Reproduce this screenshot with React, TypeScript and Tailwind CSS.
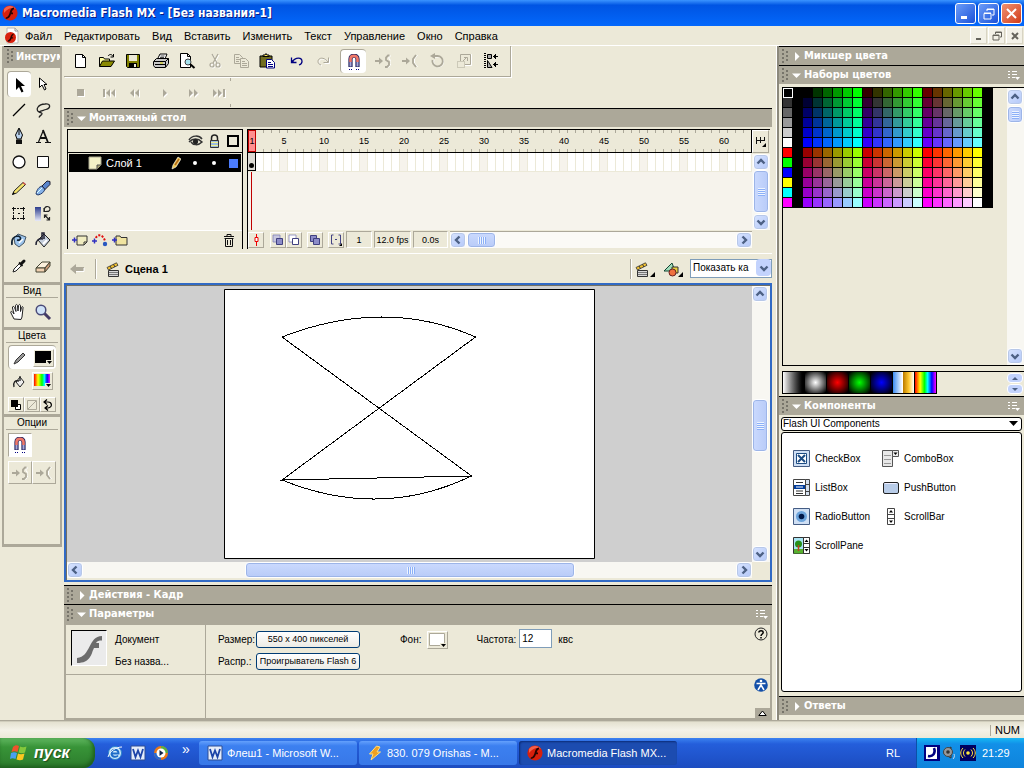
import React from "react";

type Kids = { children?: React.ReactNode };
type IcProps = Kids & { w?: number; h?: number; vb?: string };

function Ic({ w = 16, h = 16, vb, children }: IcProps) {
  return (
    <svg width={w} height={h} viewBox={vb ?? `0 0 ${w} ${h}`} fill="none" className="block shrink-0" aria-hidden="true">
      {children}
    </svg>
  );
}

/* ---------- logos ---------- */
const FlashBall = ({ s = 16 }: { s?: number }) => (
  <Ic w={s} h={s} vb="0 0 16 16">
    <circle cx="8" cy="8" r="7.6" fill="#d8200c" />
    <path d="M2 4A7.5 7.5 0 0 1 14 4Q8 1 2 8Z" fill="#f4604a" />
    <path d="M12 2.5C8.5 2.8 8.3 6 7.4 8.4 6.6 10.8 5.7 12 3.8 12.4v1.7c3.2-.2 4.4-2.3 5.2-4.8h2V7.6H9.7C10.200 5.800 10.600 4.700 12 4.300Z" fill="#2a0400" />
  </Ic>
);
const FlashDoc = () => (
  <Ic w={16} h={17}>
    <path d="M3 1h8l3 3v12H3z" fill="#fff" stroke="#b8b8b8" />
    <path d="M11 1v3h3" stroke="#999" />
    <circle cx="6.500" cy="10.500" r="5.500" fill="#d8200c" />
    <path d="M9.500 6.500C7 7 7 9 6.300 10.600 5.700 12.400 5 13 3.800 13.500v1.300c2.400-.2 3.300-1.800 3.800-3.300h1.500v-1.300H8c.3-1.200.600-2 1.500-2.300Z" fill="#2a0400" />
  </Ic>
);

/* ---------- main toolbar icons ---------- */
const NewI = () => <Ic><path d="M2.500 1.500h7l3 3v10h-10z" fill="#fff" stroke="#000" /><path d="M9.500 1.500v3h3" stroke="#000" /></Ic>;
const OpenI = () => (
  <Ic>
    <path d="M.5 13.500v-9h4l1 1.500h5v2" fill="#ffff9c" stroke="#000" />
    <path d="M.5 13.500l3-5.500h12l-3.500 5.500z" fill="#8a8a00" stroke="#000" />
    <path d="M9 3c1.500-2 4-2 5 .5M14.500 1v3h-3" stroke="#000" />
  </Ic>
);
const SaveI = () => (
  <Ic>
    <path d="M1.500 1.500h13v13h-12l-1-1z" fill="#808000" stroke="#000" />
    <path d="M4 2h8v6H4z" fill="#ece9d8" /><path d="M4 10h8v4.500H4z" fill="#000" /><path d="M9 11h2v3H9z" fill="#ece9d8" />
  </Ic>
);
const PrintI = () => (
  <Ic>
    <path d="M5 5l2-4h7l-2 5" fill="#fff" stroke="#000" /><path d="M7.500 3h4M7 4.500h4" stroke="#000" strokeWidth=".7" />
    <path d="M.5 8.500l3-3h12v5l-3 4H2l-1.500-2z" fill="#c8c8c8" stroke="#000" />
    <path d="M1 8.500h11.500l3-3M12.500 8.500v5.500M2 11.500h10" stroke="#000" /><path d="M7 10h3" stroke="#d8d000" />
  </Ic>
);
const PreviewI = () => (
  <Ic w={17} h={16}>
    <path d="M1.500.5h7l3 3v11h-10z" fill="#fff" stroke="#000" /><path d="M8.500.5v3h3" stroke="#000" />
    <circle cx="9" cy="9" r="3" fill="#a8e4f0" stroke="#444" /><path d="M11 11l4.500 4" stroke="#000" strokeWidth="2" />
  </Ic>
);
const CutI = () => (
  <Ic>
    <g stroke="#fff" transform="translate(1 1)"><path d="M5 1l5 9M11 1L6 10" /><circle cx="5" cy="12" r="2" /><circle cx="11" cy="12" r="2" /></g>
    <g stroke="#aca899" strokeWidth="1.200"><path d="M5 1l5 9M11 1L6 10" /><circle cx="5" cy="12" r="2" /><circle cx="11" cy="12" r="2" /></g>
  </Ic>
);
const CopyI = () => (
  <Ic>
    <path d="M1.500 1.500h5l3 3v6h-8z" stroke="#aca899" /><path d="M3 4.500h3M3 6.500h4M3 8.500h3" stroke="#aca899" />
    <path d="M7.500 5.500h5l3 3v6h-8z" fill="#ece9d8" stroke="#aca899" /><path d="M9 8.500h3M9 10.500h5M9 12.500h5" stroke="#aca899" />
  </Ic>
);
const PasteI = () => (
  <Ic>
    <path d="M1 3h12v11H1z" fill="#706c20" stroke="#000" /><path d="M4 3.500V2h2l1-1.500L8 2h2v1.500z" fill="#ffe860" stroke="#000" />
    <path d="M7.500 6.500h5l3 3v5.500h-8z" fill="#fff" stroke="#000080" /><path d="M9 9.500h3M9 11.500h5M9 13.500h5" stroke="#000080" />
  </Ic>
);
const UndoI = () => <Ic><path d="M2.500 4.500v5h5M3 9c4-5.500 10-4.500 10-.500 0 2-1.500 3-3 3.500" stroke="#000080" strokeWidth="1.300" /><path d="M2 6v4h4z" fill="#000080" /></Ic>;
const RedoI = () => (
  <Ic>
    <path d="M13.500 4.500v5h-5M13 9C9 3.500 3 4.500 3 8.500c0 2 1.500 3 3 3.500" stroke="#fff" transform="translate(1 1)" />
    <path d="M13.500 4.500v5h-5M13 9C9 3.500 3 4.500 3 8.500c0 2 1.500 3 3 3.500" stroke="#aca899" />
  </Ic>
);
const MagnetI = () => (
  <Ic>
    <path d="M4.500 13V5c0-4.500 7-4.500 7 0v8" stroke="#20205c" strokeWidth="4.200" />
    <path d="M4.500 8V5c0-4.200 7-4.200 7 0v3" stroke="#f07868" strokeWidth="2.600" />
    <path d="M4.500 8v4.500M11.500 8v4.500" stroke="#a8a8d8" strokeWidth="2" />
    <path d="M3 15.500h1M5 15.500h1M10 15.500h1M12 15.500h1" stroke="#000080" />
  </Ic>
);
const SmoothI = () => (
  <Ic>
    <path d="M14 3h-2v3l2 1.500v3L12 14H9" stroke="#fff" transform="translate(2 0)" />
    <path d="M0 8h4" stroke="#aca899" strokeWidth="2" /><path d="M4 4.500L8 8l-4 3.500z" fill="#aca899" />
    <path d="M14.500 2.500h-1.500l-2 2V7l3 2v3l-2 2h-2" stroke="#aca899" strokeWidth="1.800" />
  </Ic>
);
const StraightI = () => (
  <Ic>
    <path d="M15.500 2l-3 4v4l3 4" stroke="#fff" />
    <path d="M0 8h4" stroke="#aca899" strokeWidth="2" /><path d="M4 4.500L8 8l-4 3.500z" fill="#aca899" />
    <path d="M14 2l-3 4v4l3 4" stroke="#aca899" strokeWidth="1.800" />
  </Ic>
);
const RotateI = () => (
  <Ic><path d="M4 6a5 5 0 1 0 5-3H4" stroke="#fff" transform="translate(1 1)" /><path d="M3.500 7a5.200 5.200 0 1 0 5-4H4" stroke="#aca899" strokeWidth="1.800" /><path d="M1 3l5-3v6z" fill="#aca899" /></Ic>
);
const ScaleI = () => (
  <Ic>
    <path d="M4.500 8V1.500h10v10H9" stroke="#aca899" /><path d="M7 8l4-4M8 4.500h3.500V8" stroke="#aca899" />
    <path d="M1.500 8.500h7v6h-7z" stroke="#aca899" strokeDasharray="1 1" /><path d="M15.500 1v11.500H9" stroke="#fff" />
  </Ic>
);
const AlignI = () => (
  <Ic>
    <path d="M2 0v16" stroke="#000" strokeWidth="2" strokeDasharray="1 1" /><path d="M4.500 1.500h4v4h-4z" fill="#aaa" stroke="#000" />
    <path d="M4.500 7.500v7H9z" fill="#aaa" stroke="#000" /><path d="M10 3.500h5M10 11.500h5M11.500 2v3M12.500 1v5M11.500 10v3M12.500 9v5" stroke="#000" />
  </Ic>
);

/* ---------- toolbox icons ---------- */
const Tools: [string, React.ReactNode][] = [
  ["Стрелка", <Ic w={18} h={18}><path d="M5 2v12l3-3 2.500 5.500 2-1L10 10h4z" fill="#000" /></Ic>],
  ["Выделение", <Ic w={18} h={18}><path d="M5.500 3v9.500L8 10l2.500 5 1.500-1-2-4.500h3z" fill="#fff" stroke="#000" /></Ic>],
  ["Линия", <Ic w={18} h={18}><path d="M3 15L15 3" stroke="#000" strokeWidth="1.200" /></Ic>],
  ["Лассо", <Ic w={18} h={18}><path d="M5 11C1 9 4 3 11 3c6-.500 6 4 1 5.500-3 1-5 1-7 2.500 1 1 2.500.500 3 1.500.300 1.500-2 1.500-3 4" stroke="#222" strokeWidth="1.300" /></Ic>],
  ["Перо", <Ic w={18} h={18}><path d="M9 1l-3.500 7L7 12h4l1.500-4z" fill="#b9d2ee" stroke="#000" /><path d="M9 2v6" stroke="#000" /><path d="M6 12.500h6V17H6z" fill="#111" /></Ic>],
  ["Текст", <Ic w={18} h={18}><path d="M2 15.500h5M11 15.500h6M4.500 15L9.500 3" stroke="#111" strokeWidth="1.200" /><path d="M9 3l5 12.500M6 11h6.500" stroke="#111" strokeWidth="1.800" /></Ic>],
  ["Овал", <Ic w={18} h={18}><circle cx="9" cy="9" r="6" fill="#fff" stroke="#111" strokeWidth="1.300" /></Ic>],
  ["Прямоугольник", <Ic w={18} h={18}><path d="M3.500 3.500h11v11h-11z" fill="#fff" stroke="#111" /></Ic>],
  ["Карандаш", <Ic w={18} h={18}><path d="M2.500 15.500l1.500-3.500L13 3.500l2.500 2L6.500 14z" fill="#f5e46c" stroke="#222" /><path d="M13 3.500l2.500 2" stroke="#d05050" strokeWidth="1.500" /><path d="M2 16l3-1.500L3.500 13z" fill="#000" /></Ic>],
  ["Кисть", <Ic w={18} h={18}><path d="M2 15c1-5 3-7 6-8l3 3c-1 3-3 5-7 6z" fill="#86b2e8" stroke="#223a6a" /><path d="M8 7l5-5 3 .5v3l-5 5z" fill="#5a86cc" stroke="#223" /><path d="M3 14l5-5" stroke="#dff" /></Ic>],
  ["Трансформация", <Ic w={18} h={18}><path d="M4 3.500h10M4 13.500h10M3.500 4v10M13.500 4v10" stroke="#111" strokeDasharray="2 1" /><path d="M2 3.500h3M12 3.500h3M2 13.500h3M12 13.500h3M3.500 2v3M13.500 2v3M3.500 12v3M13.500 12v3M8 8.500h2" stroke="#111" /></Ic>],
  ["Заливка", <Ic w={18} h={18}><defs><linearGradient id="gt" x1="0" y1="0" x2="0" y2="1"><stop offset="0" stopColor="#2c3c8c" /><stop offset="1" stopColor="#e8eaf8" /></linearGradient></defs><path d="M1 2h6v14H1z" fill="url(#gt)" /><path d="M10.500 6C9 1 16 0 16 4c0 2-2 3-3.500 2M10 3v3.500h3M10.500 10l5 5M10.500 13v-3h3M12.500 15h3v-3" stroke="#222" strokeWidth="1.200" /></Ic>],
  ["Чернила", <Ic w={18} h={18}><path d="M4 7l4-4 8 3-2 6-5 4-4-3z" fill="#9cc4ec" stroke="#456" /><path d="M2 14C1 8 4 5 8 5c4 1 3 5-1 4" stroke="#123" strokeWidth="1.600" /><path d="M9 12l4-4" stroke="#fff" strokeWidth="1.500" /></Ic>],
  ["Ведро", <Ic w={18} h={18}><path d="M4 9l6-6 6 6-6 7z" fill="#c4cedc" stroke="#222" /><path d="M2 14c0-5 3-7 7-6M10 8V2H8v5" stroke="#223" strokeWidth="1.500" /><path d="M9 13l4-4" stroke="#fff" strokeWidth="2" /></Ic>],
  ["Пипетка", <Ic w={18} h={18}><path d="M3 15l1-3 6-6 2 2-6 6z" fill="#fff" stroke="#222" /><path d="M9 5.500l3.500 3.500" stroke="#111" strokeWidth="1.800" /><path d="M11 7L14 4" stroke="#111" strokeWidth="3" strokeLinecap="round" /></Ic>],
  ["Ластик", <Ic w={18} h={18}><path d="M2 11l6-6h8l-5 6z" fill="#fcf0dc" stroke="#443" /><path d="M2 11h9v4H2z" fill="#f0d0b0" stroke="#443" /><path d="M11 11l5-6v4l-5 6z" fill="#cc9a78" stroke="#443" /></Ic>],
];
const HandI = () => <Ic w={18} h={18}><path d="M5 16L2 10c-1-2 1-2 2-.5L5 11 3.500 5C3 3 5 3 5.500 4.500L7 8.500 6.500 3c0-2 2-2 2 0L9 8l.500-5c0-2 2-2 2 0v5.500l1-4c.500-1.500 2-1 1.500.500L13 14l-1 2.500z" fill="#fff" stroke="#222" /></Ic>;
const ZoomI = () => <Ic w={18} h={18}><path d="M10 10l6 6" stroke="#443a64" strokeWidth="3" /><circle cx="7" cy="7" r="4.800" fill="#cfe2f8" stroke="#4a4a78" strokeWidth="1.500" /></Ic>;

/* ---------- shared pieces ---------- */
const Chevron = ({ dir }: { dir: "up" | "down" | "left" | "right" }) => {
  const d = { up: "M1.500 6.500L5 3l3.500 3.500", down: "M1.500 3.500L5 7l3.500-3.500", left: "M6.500 1.500L3 5l3.500 3.500", right: "M3.500 1.500L7 5 3.500 8.500" }[dir];
  return <Ic w={10} h={10}><path d={d} stroke="#4d6185" strokeWidth="2.400" /></Ic>;
};
const ScrollBtn = ({ dir }: { dir: "up" | "down" | "left" | "right" }) => (
  <button aria-label={dir} className="flex size-4 shrink-0 items-center justify-center rounded-sm border border-white bg-linear-to-br from-[#d8e4ff] to-[#b4c8f8] shadow-[0_0_0_1px_#b8c8e8_inset]">
    <Chevron dir={dir} />
  </button>
);
const VThumb = ({ cls }: { cls: string }) => (
  <div className={`flex w-4 shrink-0 flex-col items-center justify-center gap-px rounded-sm border border-white bg-linear-to-r from-[#cbdafe] to-[#b8cbf8] shadow-[0_0_0_1px_#9db5e8_inset] ${cls}`}>
    {[0, 1, 2, 3].map((i) => <i key={i} className="h-px w-[7px] bg-[#eef4fe] shadow-[0_1px_0_#8cb0f8]" />)}
  </div>
);
const HThumb = ({ cls }: { cls: string }) => (
  <div className={`flex h-4 shrink-0 items-center justify-center gap-px rounded-sm border border-white bg-linear-to-b from-[#cbdafe] to-[#b8cbf8] shadow-[0_0_0_1px_#9db5e8_inset] ${cls}`}>
    {[0, 1, 2, 3].map((i) => <i key={i} className="h-[7px] w-px bg-[#eef4fe] shadow-[1px_0_0_#8cb0f8]" />)}
  </div>
);
const Grip = () => (
  <Ic w={6} h={15}>
    {[0, 4, 8, 12].map((y) => <path key={y} d={`M0 ${y}h2v2H0z`} fill="#77746a" />)}
    {[2, 6, 10].map((y) => <path key={y} d={`M4 ${y}h2v2H4z`} fill="#77746a" />)}
  </Ic>
);
function PanelHead({ title, open, menu }: { title: string; open?: boolean; menu?: boolean }) {
  return (
    <h2 className="flex h-[19px] shrink-0 items-center border-t border-black bg-[#aca899] pr-1 pl-[3px] font-['DejaVu_Sans_Condensed','DejaVu_Sans',sans-serif] text-[11px] font-bold text-white">
      <Grip />
      <button className="ml-1 flex items-center gap-[3px]">
        <Ic w={9} h={9}>
          {open ? <path d="M0 2.500h9L4.500 7z" fill="#fff" /> : <path d="M3 0v9l4.500-4.500z" fill="#fff" />}
        </Ic>
        <span className="leading-[14px] whitespace-nowrap">{title}</span>
      </button>
      {menu && (
        <button aria-label="Меню" className="ml-auto">
          <Ic w={12} h={11}><path d="M0 1.500h2M4 1.500h5M0 4.500h2M4 4.500h5M0 7.500h2M4 7.500h3" stroke="#fff" /><path d="M7 7h5L9.500 10z" fill="#fff" /></Ic>
        </button>
      )}
    </h2>
  );
}
const Tb = ({ label, on, children }: Kids & { label: string; on?: boolean }) => (
  <button aria-label={label} className={`flex h-6 w-[26px] shrink-0 items-center justify-center rounded-sm ${on ? "border-t border-l border-[#aca899] bg-white" : ""}`}>
    {children}
  </button>
);
const raised = "border border-t-white border-l-white border-r-[#aca899] border-b-[#aca899]";
const sunken = "border border-t-[#aca899] border-l-[#aca899] border-r-white border-b-white";

/* ---------- window frame ---------- */
const capBtn = "flex size-[21px] items-center justify-center rounded-[3px] border border-white";
function TitleBar() {
  return (
    <header className="flex h-[26px] shrink-0 items-center gap-1 bg-linear-to-b from-[#3a93ff] via-[#0054e3] via-20% to-[#0468fb] px-0.5">
      <FlashBall />
      <h1 className="flex-1 font-['DejaVu_Sans_Condensed','DejaVu_Sans',sans-serif] text-[12px] font-bold whitespace-nowrap text-white [text-shadow:1px_1px_0_#0a1883]">
        Macromedia Flash MX - [Без названия-1]
      </h1>
      <div className="flex gap-0.5">
        <button aria-label="Свернуть" className={`${capBtn} bg-linear-to-br from-[#6c9cf8] to-[#1c50d8]`}><Ic w={13} h={13}><path d="M2 9h6v3H2z" fill="#fff" /></Ic></button>
        <button aria-label="Восстановить" className={`${capBtn} bg-linear-to-br from-[#6c9cf8] to-[#1c50d8]`}><Ic w={13} h={13}><path d="M5 4V2h7v6h-2M2 6.500h7V12H2zM5 2.500h7M2 6h7" stroke="#fff" /></Ic></button>
        <button aria-label="Закрыть" className={`${capBtn} bg-linear-to-br from-[#f09070] to-[#d03810]`}><Ic w={13} h={13}><path d="M2 2l9 9M11 2l-9 9" stroke="#fff" strokeWidth="2" /></Ic></button>
      </div>
    </header>
  );
}
function MenuBar() {
  const items = ["Файл", "Редактировать", "Вид", "Вставить", "Изменить", "Текст", "Управление", "Окно", "Справка"];
  const mb = "flex h-[17px] w-[17px] items-center justify-center border border-white border-r-[#d8d4c4] border-b-[#d8d4c4] bg-[#f3f1e7]";
  return (
    <nav className="flex h-5 shrink-0 items-center border-b border-white pr-px pl-1">
      <FlashDoc />
      <ul className="ml-[5px] flex flex-1 gap-3 text-[11px] leading-4 text-black">
        {items.map((t) => <li key={t}><button className="whitespace-nowrap">{t}</button></li>)}
      </ul>
      <div className="flex gap-px">
        <button aria-label="Свернуть документ" className={mb}><Ic w={10} h={10}><path d="M2 7h5v2H2z" fill="#66645c" /></Ic></button>
        <button aria-label="Восстановить документ" className={mb}><Ic w={10} h={10}><path d="M3.500 3V1h6v5H8M1 4h6v5H1zM3 1.500h6M1 4.500h6" stroke="#66645c" /></Ic></button>
        <button aria-label="Закрыть документ" className={mb}><Ic w={10} h={10}><path d="M2 2l6 6M8 2L2 8" stroke="#66645c" strokeWidth="2" /></Ic></button>
      </div>
    </nav>
  );
}

/* ---------- toolbox ---------- */
const BoxTitle = ({ children }: Kids) => <h3 className="mx-0.5 h-[13px] border-b border-[#aca899] text-center text-[10px] leading-3">{children}</h3>;
const Tri = () => <path d="M0 0h5L2.500 3z" fill="#000" />;
function Toolbox() {
  return (
    <aside className="flex w-16 shrink-0 flex-col items-start pl-0.5">
      <div className="flex w-[60px] flex-col gap-[3px] bg-[#aca899] pr-0.5 pb-[3px] pl-0.5 text-black">
        <h2 className="-mb-px flex h-5 items-center gap-[3px] overflow-hidden border-t border-black pl-[3px] font-['DejaVu_Sans_Condensed','DejaVu_Sans',sans-serif] text-[11px] font-bold text-white"><Grip />Инструменты</h2>
        <div className="grid h-[214px] grid-cols-2 content-start bg-[#ece9d8] pr-[5px] pl-[3px] pt-[3px]">
          {Tools.map(([n, ic], i) => (
            <button key={n} aria-label={n} className={`flex h-[26px] items-center justify-center rounded-sm ${i === 0 ? "border-t border-l border-[#aca899] bg-white" : ""}`}>{ic}</button>
          ))}
        </div>
        <section className="h-[42px] bg-[#ece9d8]">
          <BoxTitle>Вид</BoxTitle>
          <div className="grid h-[27px] grid-cols-2 place-items-center pr-[5px] pl-px"><button aria-label="Рука"><HandI /></button><button aria-label="Лупа"><ZoomI /></button></div>
        </section>
        <section className="h-[84px] bg-[#ece9d8]">
          <BoxTitle>Цвета</BoxTitle>
          <div className="mx-1 mt-0.5 flex h-6 items-center justify-around rounded-sm border-t border-l border-[#aca899] bg-white">
            <Ic><path d="M2 14l2-4 7-7 2 2-7 7z" fill="#999" stroke="#333" /></Ic>
            <button aria-label="Цвет линии" className={`bg-[#ece9d8] p-px ${raised}`}><Ic w={17} h={14}><path d="M0 0h16v12H0z" fill="#000" /><path d="M11 9h6v5h-6z" fill="#ece9d8" /><g transform="translate(12 10)"><Tri /></g></Ic></button>
          </div>
          <div className="mx-1 flex h-6 items-center justify-around">
            <Ic><path d="M5 9l4-5 4 5-4 5z" fill="#eee" stroke="#222" /><path d="M3 14c-1-5 1-7 5-6M9 8V3" stroke="#222" strokeWidth="1.300" /></Ic>
            <button aria-label="Цвет заливки" className={`p-px ${raised}`}>
              <Ic w={17} h={14}>
                <defs><linearGradient id="rb"><stop offset="0" stopColor="#f00" /><stop offset=".25" stopColor="#ff0" /><stop offset=".5" stopColor="#0f0" /><stop offset=".65" stopColor="#0ff" /><stop offset=".82" stopColor="#00f" /><stop offset="1" stopColor="#f0f" /></linearGradient></defs>
                <path d="M0 0h16v12H0z" fill="url(#rb)" /><path d="M11 9h6v5h-6z" fill="#ece9d8" /><g transform="translate(12 10)"><Tri /></g>
              </Ic>
            </button>
          </div>
          <div className="mx-1 mt-1 grid grid-cols-3">
            <button aria-label="Чёрный и белый" className={`flex h-[15px] items-center justify-center ${raised}`}><Ic w={12} h={12}><path d="M5.500 5.500h5v5h-5z" fill="#fff" stroke="#000" /><path d="M1 1h7v7H1z" fill="#000" /></Ic></button>
            <button aria-label="Без цвета" className={`flex h-[15px] items-center justify-center ${raised}`}><Ic w={12} h={12}><path d="M1.500 1.500h9v9h-9zM2 10l8-8" stroke="#aca899" /></Ic></button>
            <button aria-label="Поменять" className={`flex h-[15px] items-center justify-center ${raised}`}><Ic w={12} h={12}><path d="M2 3h4c4 0 5 5 0 6H3M5 .5L2 3l3 2.500M6 6.500L3 9l3 2.500" stroke="#000" strokeWidth="1.200" /></Ic></button>
          </div>
        </section>
        <section className="h-[127px] bg-[#ece9d8]">
          <BoxTitle>Опции</BoxTitle>
          <div className="mx-1 mt-[3px] grid grid-cols-2 gap-y-1">
            <button aria-label="Привязка" className={`flex h-6 items-center justify-center bg-white ${sunken}`}><MagnetI /></button><span />
            <button aria-label="Сгладить" className={`flex h-[23px] items-center justify-center ${raised}`}><SmoothI /></button>
            <button aria-label="Выпрямить" className={`flex h-[23px] items-center justify-center ${raised}`}><StraightI /></button>
          </div>
        </section>
      </div>
    </aside>
  );
}

/* ---------- toolbars ---------- */
const Play = ({ d }: { d: string }) => <Ic w={14} h={12}><path d={d} fill="#fff" transform="translate(1 1)" /><path d={d} fill="#aca899" /></Ic>;
function Toolbars() {
  return (
    <>
      <div className="flex h-[31px] w-[447px] shrink-0 items-center border-r border-b border-[#aca899] pl-1 shadow-[1px_1px_0_#fff]">
        <Tb label="Новый"><NewI /></Tb><Tb label="Открыть"><OpenI /></Tb><Tb label="Сохранить"><SaveI /></Tb>
        <div className="ml-0.5 flex"><Tb label="Печать"><PrintI /></Tb><Tb label="Просмотр"><PreviewI /></Tb></div>
        <div className="ml-0.5 flex"><Tb label="Вырезать"><CutI /></Tb><Tb label="Копировать"><CopyI /></Tb><Tb label="Вставить"><PasteI /></Tb></div>
        <div className="ml-1 flex"><Tb label="Отменить"><UndoI /></Tb><Tb label="Повторить"><RedoI /></Tb></div>
        <div className="ml-1 flex gap-px"><Tb label="Привязка" on><MagnetI /></Tb></div>
        <div className="ml-1 flex gap-px"><Tb label="Сгладить"><SmoothI /></Tb><Tb label="Выпрямить"><StraightI /></Tb><Tb label="Поворот"><RotateI /></Tb><Tb label="Масштаб"><ScaleI /></Tb><Tb label="Выравнивание"><AlignI /></Tb></div>
      </div>
      <div className="flex h-[31px] w-[164px] shrink-0 items-center gap-[14px] pl-2.5">
        <button aria-label="Стоп"><Play d="M3 2h7v7H3z" /></button>
        <button aria-label="В начало"><Play d="M1 2h2v8H1zM8 2v8L4 6zM13 2v8L9 6z" /></button>
        <button aria-label="Назад" className="-ml-0.5"><Play d="M6 2v8L2 6zM11 2v8L7 6z" /></button>
        <button aria-label="Играть" className="ml-0.5"><Play d="M5 2v8l4-4z" /></button>
        <button aria-label="Вперёд"><Play d="M3 2v8l4-4zM8 2v8l4-4z" /></button>
        <button aria-label="В конец" className="-ml-0.5"><Play d="M1 2v8l4-4zM6 2v8l4-4zM11 2h2v8h-2z" /></button>
        <div className="-ml-2.5 flex h-full flex-col justify-between py-px"><i className="h-[3px] w-px bg-[#aca899]" /><i className="h-[3px] w-px bg-[#aca899]" /></div>
      </div>
    </>
  );
}

/* ---------- timeline ---------- */
const PlusMark = ({ x, y }: { x: number; y: number }) => <path d={`M${x} ${y}h5M${x + 2.5} ${y - 2.5}v5`} stroke="#3030c0" strokeWidth="1.500" />;
const TBtn = ({ label, children }: Kids & { label: string }) => <button aria-label={label} className={`flex size-4 shrink-0 items-center justify-center ${raised}`}>{children}</button>;
const frames = Array.from({ length: 63 }, (_, i) => i + 1);
function Timeline() {
  return (
    <div className="flex h-[122px] shrink-0 pt-[2px] pr-0.5 pl-[3px] text-black">
      <div className="flex w-[176px] shrink-0 flex-col border-x border-t border-black">
        <div className="flex h-[23px] items-center justify-end gap-1.5 border-b border-black pr-[3px]">
          <Ic w={15} h={12}><path d="M1 5c3-5 10-5 13-1M1 7c4-4 9-4 13 0-4 4-9 3-11 0" stroke="#333" strokeWidth="1.500" /><circle cx="7.500" cy="6.500" r="2.600" fill="#222" /></Ic>
          <Ic w={11} h={14}><path d="M2.500 7V4c0-4 6-4 6 0v3" stroke="#222" strokeWidth="1.500" /><path d="M1.500 6.500h8v7h-8z" fill="#9cbce0" stroke="#333" /><path d="M2 8.500h7M2 11.500h7" stroke="#eef08c" /></Ic>
          <Ic w={13} h={12}><path d="M2 1h10v10H2z" stroke="#000" strokeWidth="2" /></Ic>
        </div>
        <div className="mx-px mt-px flex h-[18px] items-center bg-black pl-[19px] text-white">
          <Ic w={14} h={14}><path d="M1 1h12v8l-4 4H1z" fill="#f4f2c8" stroke="#aaa890" /><path d="M13 9H9v4" fill="#a8a470" stroke="#555" /></Ic>
          <span className="ml-1 text-[11px]">Слой 1</span>
          <span className="ml-auto"><Ic w={10} h={14}><path d="M1 13l1-4 5-8 3 2-5 8z" fill="#f0c850" stroke="#fff" strokeWidth=".6" /><path d="M4 9l4-6" stroke="#b06818" strokeWidth="1.500" /></Ic></span>
          <i className="ml-3 size-1 rounded-full bg-white" /><i className="ml-[15px] size-1 rounded-full bg-white" />
          <i className="mr-[3px] ml-[13px] h-[9px] w-[9px] bg-[#4c7cfc]" />
        </div>
        <div className="mx-px flex-1 bg-[#f6f3ec]" />
        <div className="flex h-[19px] items-center gap-1 border-t border-white pr-[7px] pl-1">
          <button aria-label="Новый слой"><Ic w={16} h={13}><path d="M5 2h10v6l-3 3H5z" fill="#f0ecc0" stroke="#333" /><path d="M15 8h-3v3" stroke="#333" /><PlusMark x={0} y={6} /></Ic></button>
          <button aria-label="Направляющий слой"><Ic w={16} h={13}><path d="M4 4c1-4 7-4 9 3" stroke="#e01010" strokeWidth="2" strokeDasharray="2 1.500" /><circle cx="13" cy="10" r="2.200" fill="#2858c0" /><PlusMark x={0} y={7} /></Ic></button>
          <button aria-label="Новая папка"><Ic w={16} h={13}><path d="M4 11V2h4l1 1.500h6V11z" fill="#f0e4a0" stroke="#333" /><PlusMark x={0} y={6} /></Ic></button>
          <button aria-label="Удалить" className="ml-auto"><Ic w={12} h={13}><path d="M1 2.500h10M4 2V.500h4V2M1.500 4.500h9M2.500 4.500v8h7v-8M4.500 6v5M7.500 6v5" stroke="#111" /></Ic></button>
        </div>
      </div>
      <div className="ml-1 flex min-w-0 flex-1 flex-col border-t border-l border-black">
        <div className="flex min-h-0 flex-1">
          <div className="flex min-w-0 flex-1 flex-col overflow-hidden bg-[#f6f3ec]">
            <div className="flex h-[23px] shrink-0 overflow-hidden border-r border-b border-black bg-[#ece9d8]">
              {frames.map((n) => (
                <div key={n} className={`flex h-[22px] w-2 shrink-0 flex-col justify-between ${n === 1 ? "border border-[#c00000] bg-[#ff9090]" : ""}`}>
                  <i className={`ml-auto h-[3px] w-px ${n === 1 ? "" : "bg-[#aca899]"}`} />
                  <span className="flex h-3 justify-center text-[9px] leading-3 whitespace-nowrap">{n === 1 || n % 5 === 0 ? n : ""}</span>
                  <i className={`ml-auto h-[3px] w-px ${n === 1 ? "" : "bg-[#aca899]"}`} />
                </div>
              ))}
            </div>
            <div className="flex h-[19px] shrink-0 overflow-hidden border-b border-[#ece9d8]">
              {frames.map((n) => (
                <div key={n} className={`flex h-[18px] w-2 shrink-0 justify-center ${n === 1 ? "items-end border-r border-b border-black bg-[#dcdad4] pb-0.5" : "border-r border-[#ece9d8]"} ${n % 5 === 0 ? "bg-[#f6f3ec]" : n === 1 ? "" : "bg-white"}`}>
                  {n === 1 && <i className="size-[5px] rounded-full bg-black" />}
                </div>
              ))}
            </div>
            <div className="ml-[3px] w-px flex-1 bg-[#c00000]" />
          </div>
          <div className="flex w-[18px] shrink-0 flex-col">
            <button aria-label="Вид кадров" className={`mb-px flex h-[23px] w-[17px] items-center justify-center ${raised}`}><Ic w={11} h={11}><path d="M1 4.500h9M1.500 1v7M5.500 1v6M9.500 1v4" stroke="#111" /><path d="M11 7v4H7z" fill="#000" /></Ic></button>
            <div className="flex flex-1 flex-col bg-[#f8f7f2] pl-px">
              <ScrollBtn dir="up" /><VThumb cls="flex-1" /><div className="h-px" /><ScrollBtn dir="down" />
            </div>
          </div>
        </div>
        <div className="flex h-[19px] items-center bg-[#ece9d8] pr-[18px] text-[9px]">
          <div className="flex w-[202px] shrink-0 items-center">
            <TBtn label="Центрировать кадр"><Ic w={7} h={12}><path d="M3.500 0v12" stroke="#e00" /><path d="M2 3.500h3v4H2z" fill="#fff" stroke="#e00" /></Ic></TBtn>
            <div className="ml-1.5 flex">
              <TBtn label="Калька"><Ic w={12} h={12}><path d="M1 1h7v7H1z" fill="#c8c8e0" stroke="#8080b8" strokeWidth=".8" /><path d="M4.500 4.500h6v6h-6z" fill="#8c8cc8" stroke="#404080" /></Ic></TBtn>
              <TBtn label="Контуры кальки"><Ic w={12} h={12}><path d="M1 1h7v7H1z" fill="#fff" stroke="#8080b8" strokeWidth=".8" /><path d="M4.500 4.500h6v6h-6z" fill="#fff" stroke="#404080" /></Ic></TBtn>
            </div>
            <div className="ml-[5px] flex gap-[5px]">
              <TBtn label="Несколько кадров"><Ic w={12} h={12}><path d="M1.500 1.500h6v6h-6z" fill="#8c8cc8" stroke="#404080" /><path d="M4.500 4.500h6v6h-6z" fill="#8c8cc8" stroke="#404080" /></Ic></TBtn>
              <TBtn label="Маркеры"><Ic w={12} h={12}><path d="M3.500 1h-2v9h2M8.500 1h2v9h-2M5 5.500h2" stroke="#444484" /><path d="M12 9v3H9z" fill="#000" /></Ic></TBtn>
            </div>
            <span className={`ml-0.5 h-[17px] w-[26px] shrink-0 text-center leading-4 ${sunken}`}>1</span>
            <span className={`ml-0.5 h-[17px] w-[37px] shrink-0 text-center leading-4 whitespace-nowrap ${sunken}`}>12.0 fps</span>
            <span className={`ml-0.5 h-[17px] w-[35px] shrink-0 text-center leading-4 ${sunken}`}>0.0s</span>
          </div>
          <div className="flex flex-1 border-t border-[#aca899] bg-[#fbfaf6]">
            <ScrollBtn dir="left" /><HThumb cls="ml-px w-[29px]" /><div className="flex-1" /><ScrollBtn dir="right" />
          </div>
        </div>
      </div>
    </div>
  );
}

/* ---------- scene bar and stage ---------- */
const Clapper = ({ w = 15 }: { w?: number }) => (
  <Ic w={w} h={15}>
    <path d="M1 5.500L10.500.800l1.500 2.500L2.500 8z" fill="#f0c030" stroke="#333" strokeWidth=".8" /><path d="M4 4l1.500 2.500M7.500 2.300L9 5" stroke="#333" />
    <path d="M2.500 8.500h10v6h-10z" fill="#d8d8d8" stroke="#333" /><path d="M3 10.500h9M3 12.500h9" stroke="#777" />
    {w > 15 && <path d="M20 10v5h-5z" fill="#000" />}
  </Ic>
);
function SceneBar() {
  return (
    <div className="mt-1 flex h-[30px] shrink-0 items-center border-t border-white pt-px pl-1.5 text-black">
      <button aria-label="Назад к сцене"><Ic w={15} h={12}><path d="M0 6l6-5v3h8v4H6v3z" fill="#aca899" /><path d="M6 8.500h8V5" stroke="#fff" /></Ic></button>
      <i className="ml-2.5 h-5 w-0.5 border-l border-[#aca899] bg-white" />
      <div className="ml-[9px] flex items-center gap-1"><Clapper /><span className="text-[11px] font-bold">Сцена 1</span></div>
      <i className="ml-auto h-5 w-0.5 border-l border-[#aca899] bg-white" />
      <button aria-label="Сцены" className="ml-[3px]"><Clapper w={20} /></button>
      <button aria-label="Символы" className="ml-2"><Ic w={20} h={16}><path d="M1 10L9 2l3 8z" fill="#a0dcb8" stroke="#143" /><path d="M9 6h6v6H9z" fill="#e8d040" stroke="#333" /><circle cx="9.500" cy="11.500" r="3.500" fill="#f07040" stroke="#622" /><path d="M20 11v5h-5z" fill="#000" /></Ic></button>
      <div className="relative ml-[7px] mb-[3px] h-[19px] w-[82px]">
        <select aria-label="Масштаб" className="h-full w-full appearance-none border border-[#7f9db9] bg-white pl-0.5 text-[10px]"><option>Показать ка</option></select>
        <span className="pointer-events-none absolute top-px right-px flex h-[17px] w-[15px] items-center justify-center rounded-sm bg-[#c3d3fd]"><Chevron dir="down" /></span>
      </div>
    </div>
  );
}
function Stage() {
  return (
    <div className="mb-[3px] flex min-h-[297px] flex-1 flex-col border-2 border-[#316ac5]">
      <div className="flex min-h-0 flex-1 border-t border-l border-[#716f64]">
        <div className="flex min-w-0 flex-1 items-center justify-center overflow-hidden bg-[#cfcfcf]">
          <svg width="371" height="270" viewBox="224 289 371 270" role="img" aria-label="Рабочая область">
            <path d="M224.500 289.500h370v269h-370z" fill="#fff" stroke="#000" />
            <path d="M282 337Q385 297 475.500 337L282 480L471.500 476L282 337M282 480Q380 520 471.500 476" fill="none" stroke="#000" shapeRendering="crispEdges" />
          </svg>
        </div>
        <div className="flex w-[18px] shrink-0 flex-col bg-[#f8f7f2] pr-0.5">
          <ScrollBtn dir="up" /><div className="grow-[96]" /><VThumb cls="h-[53px]" /><div className="grow-[94]" /><ScrollBtn dir="down" />
        </div>
      </div>
      <div className="flex h-[18px] shrink-0 border-l border-[#716f64] bg-[#ece9d8] pr-[18px] pb-0.5">
        <div className="flex flex-1 bg-[#f8f7f2]"><ScrollBtn dir="left" /><div className="grow-[161]" /><HThumb cls="w-[330px]" /><div className="grow-[160]" /><ScrollBtn dir="right" /></div>
      </div>
    </div>
  );
}

/* ---------- properties ---------- */
const xpBtn = "h-[17px] w-[104px] rounded-[3px] border border-[#003c74] bg-linear-to-b from-white to-[#ecebe5] text-[9px] leading-[15px] whitespace-nowrap";
function Properties() {
  return (
    <div className="flex h-[97px] shrink-0 flex-col border-2 border-[#aca899] text-[10px] text-black">
      <div className="flex h-[50px] border-b border-[#aca899]">
        <div className="flex w-[140px] shrink-0 gap-2 border-r border-[#aca899] pt-[5px] pl-[5px]">
          <div className="size-[36px] border border-t-black border-l-black border-r-white border-b-white bg-[#ebebeb]">
            <Ic w={34} h={34}><path d="M30 5C16 5 19 26 5 27v5c14 0 14-9 17-15h5v-5h-3c1-2 3-2.500 6-2.500z" fill="#6c6c6c" /></Ic>
          </div>
          <div className="flex flex-col gap-2.5 pt-1 leading-3"><span>Документ</span><span>Без назва...</span></div>
        </div>
        <div className="flex flex-1 items-start gap-0.5 pt-1.5 pl-3 leading-[17px]">
          <div className="grid grid-cols-[36px_104px] gap-x-0.5 gap-y-[5px] whitespace-nowrap">
            <label htmlFor="size">Размер:</label><button id="size" className={xpBtn}>550 x 400 пикселей</button>
            <label htmlFor="pub">Распр.:</label><button id="pub" className={xpBtn}>Проигрыватель Flash 6</button>
          </div>
          <label htmlFor="bg" className="ml-[38px]">Фон:</label>
          <button id="bg" aria-label="Фон" className={`ml-1 bg-[#ece9d8] ${raised}`}><Ic w={19} h={16}><path d="M1.500 1.500h15v12h-15z" fill="#fff" stroke="#aca899" /><path d="M12 11h6v4h-6z" fill="#ece9d8" /><g transform="translate(13 12)"><Tri /></g></Ic></button>
          <label htmlFor="fps" className="ml-[26px]">Частота:</label>
          <input id="fps" defaultValue="12" className="-mt-0.5 ml-px h-[19px] w-[33px] border border-[#7f9db9] bg-white pl-0.5 text-[10px]" />
          <span className="ml-1">квс</span>
        </div>
        <button aria-label="Справка" className="mt-0.5 mr-0.5 self-start">
          <Ic w={14} h={14}><circle cx="7" cy="7" r="6" fill="#ece9d8" stroke="#222" /><path d="M4.800 5.500C5 3 9.200 3 9.200 5.500 9.200 7 7 7 7 9M7 10v1.500" stroke="#000" strokeWidth="1.500" /></Ic>
        </button>
      </div>
      <div className="flex flex-1">
        <div className="w-[140px] border-r border-[#aca899]" />
        <div className="ml-auto flex flex-col items-end justify-between pt-[3px]">
          <button aria-label="Специальные возможности" className="mr-0.5"><Ic w={14} h={14}><circle cx="7" cy="7" r="6.800" fill="#1450a8" /><circle cx="7" cy="3" r="1.300" fill="#fff" /><path d="M2.500 5.500h9M7 5v3M7 7l-3 5M7 7l3 5" stroke="#fff" strokeWidth="1.500" /></Ic></button>
          <button aria-label="Свернуть панель" className="flex h-2.5 w-[15px] items-center justify-center bg-[#aca899]"><Ic w={9} h={6}><path d="M.8 5.500L4.500 1l3.700 4.500z" fill="#fff" stroke="#000" /></Ic></button>
        </div>
      </div>
    </div>
  );
}

/* ---------- right dock ---------- */
const basics = ["#000", "#333", "#666", "#999", "#ccc", "#fff", "#f00", "#0f0", "#00f", "#ff0", "#0ff", "#f0f"];
const swatch = (row: number, col: number) => {
  const r = (Math.floor(col / 6) + (row > 5 ? 3 : 0)) * 51;
  return `rgb(${r},${(col % 6) * 51},${(row % 6) * 51})`;
};
const grads = [
  "bg-linear-to-r from-white to-black",
  "bg-[radial-gradient(circle,#fff,#000_14px)]",
  "bg-[radial-gradient(circle,#f00,#000_14px)]",
  "bg-[radial-gradient(circle,#0f0,#000_14px)]",
  "bg-[radial-gradient(circle,#00f,#000_14px)]",
  "bg-[linear-gradient(90deg,#3c8cf4,#fff_45%,#fff_50%,#c08000_50%,#ffc830_75%,#fff)]",
  "bg-[linear-gradient(90deg,#f00,#ff0_25%,#0f0_45%,#0ff_60%,#00f_80%,#f0f)]",
];
const frame = <path d="M.500.500h16v16H.500z" fill="#cfdff4" stroke="#445c84" />;
const comps: [string, React.ReactNode][] = [
  ["CheckBox", <Ic w={18} h={18}>{frame}<path d="M3.500 3.500h10v10h-10z" fill="#fff" stroke="#1c4c84" /><path d="M5 5l7 7M12 5l-7 7" stroke="#1c4c84" strokeWidth="2" /></Ic>],
  ["ComboBox", <Ic w={18} h={18}><path d="M.5.5h10v16H.500z" fill="#e8e8e8" stroke="#555" /><path d="M2 5.500h7M2 9.500h7M2 13.500h7" stroke="#999" /><path d="M10.500.5h6v6h-6z" fill="#eee" stroke="#555" /><path d="M11.500 2.500h4l-2 2.500z" fill="#000" /></Ic>],
  ["ListBox", <Ic w={18} h={18}><path d="M.5.500h12v16H.500z" fill="#fff" stroke="#444" /><path d="M3 3.500h7M3 12h7M3 14.500h7" stroke="#333" /><path d="M1 6h11v4H1z" fill="#003c9c" /><path d="M3 8h7" stroke="#fff" /><path d="M12.500.500h4v16h-4z" fill="#d4e0f0" stroke="#444" /><path d="M13 5.500h4M13 12.500h4" stroke="#444" /></Ic>],
  ["PushButton", <Ic w={18} h={18}><rect x="1.500" y="3.500" width="15" height="11" rx="1.500" fill="#b8cce8" stroke="#222" /><path d="M2.500 4.500h12" stroke="#eef" /></Ic>],
  ["RadioButton", <Ic w={18} h={18}>{frame}<circle cx="8.500" cy="8.500" r="5.500" fill="#6ca4dc" /><circle cx="8.500" cy="8.500" r="2.800" fill="#001848" /></Ic>],
  ["ScrollBar", <Ic w={18} h={18}><path d="M5.500.5h7v16h-7z" fill="#fff" stroke="#444" /><path d="M7 4.500L9 2l2 2.500zM7 12.500h4L9 15z" fill="#000" /><path d="M5.500 6.500h7M5.500 10.500h7" stroke="#444" /></Ic>],
  ["ScrollPane", <Ic w={18} h={18}><path d="M.5.500h16v16H.500z" fill="#a8e4f4" stroke="#333" /><path d="M1 12h9v4.500H1z" fill="#58b030" /><circle cx="5.500" cy="7" r="3.500" fill="#289018" /><path d="M5.500 8v6" stroke="#c04020" strokeWidth="1.500" /><path d="M10.500.500h6v16h-6z" fill="#fff" stroke="#333" /><path d="M11.500 5l2-2.500 2 2.500zM11.500 12h4l-2 2.500z" fill="#000" /><path d="M10.500 6.500h6M10.500 10.500h6" stroke="#333" /></Ic>],
];
function Dock() {
  return (
    <aside className="flex w-[247px] shrink-0 flex-col border-l-2 border-[#8c897c] text-black">
      <PanelHead title="Микшер цвета" />
      <PanelHead title="Наборы цветов" open menu />
      <div className="mt-[3px] ml-[3px] flex h-[279px] shrink-0 border-y border-l border-black">
        <div className="flex h-[120px] bg-black">
          <div className="flex w-5 flex-col">
            {basics.map((c, i) => <i key={c} className={`mr-2.5 block h-2.5 w-2.5 ${i === 0 ? "border border-white" : "border-r border-b border-black"}`} style={{ backgroundColor: c }} />)}
          </div>
          <div className="grid grid-cols-[repeat(18,10px)] pr-2.5">
            {Array.from({ length: 216 }, (_, i) => <i key={i} className="block h-2.5 border-r border-b border-black" style={{ backgroundColor: swatch(Math.floor(i / 18), i % 18) }} />)}
          </div>
        </div>
        <div className="ml-auto flex w-[17px] flex-col bg-[#f8f7f2] py-px pr-px">
          <ScrollBtn dir="up" /><VThumb cls="mt-px h-[17px]" /><div className="flex-1" /><ScrollBtn dir="down" />
        </div>
      </div>
      <div className="mt-[5px] mb-0.5 ml-[3px] flex h-[23px] shrink-0 border-l border-black">
        {grads.map((g) => <i key={g} className={`w-[22px] border-y border-r border-black ${g}`} />)}
        <div className="flex flex-1 flex-col items-end gap-px border-t border-black pr-px pt-px">
          {["M4 0l3 3H1z", "M1 0h6L4 3z"].map((d) => (
            <button key={d} aria-label="Прокрутка" className="flex h-2.5 w-4 items-center justify-center rounded-sm border border-white bg-[#c3d3fd]"><Ic w={8} h={3}><path d={d} fill="#4d6185" /></Ic></button>
          ))}
        </div>
      </div>
      <PanelHead title="Компоненты" open menu />
      <div className="relative mt-0.5 mr-0.5 ml-0.5 h-[14px] shrink-0">
        <select aria-label="Набор компонентов" className="block h-full w-full appearance-none rounded-[3px] border border-black bg-white pl-px text-[10px] leading-3"><option>Flash UI Components</option></select>
        <span className="pointer-events-none absolute top-1 right-1"><Ic w={9} h={6}><path d="M0 0h9L4.500 5z" fill="#000" /></Ic></span>
      </div>
      <ul className="mx-0.5 mt-px grid flex-1 grid-cols-[89px_1fr] content-start rounded-[3px] border border-black bg-white pt-[11px] pl-[11px] text-[10px]">
        {comps.map(([n, ic]) => <li key={n} className="flex h-[29px] items-center gap-1"><button className="flex items-center gap-1">{ic}<span>{n}</span></button></li>)}
      </ul>
      <div className="mt-1 mb-[5px]"><PanelHead title="Ответы" /></div>
    </aside>
  );
}

/* ---------- status bar and taskbar ---------- */
const WordI = ({ s = 16 }: { s?: number }) => <Ic w={s} h={s} vb="0 0 16 16"><path d="M1 1h14v14H1z" fill="#e4ecfa" stroke="#2c4c94" /><path d="M3 4l2.500 8L8 5.500l2.500 6.500L13 4" stroke="#1c44a8" strokeWidth="1.800" /></Ic>;
function TaskBar() {
  const tasks: [string, React.ReactNode][] = [
    ["Флеш1 - Microsoft W...", <WordI />],
    ["830. 079 Orishas - M...", <Ic><path d="M9.500 1L2.500 9H6l-2 6 9.500-8H10l3-5z" fill="#f0a020" stroke="#ffe080" /></Ic>],
    ["Macromedia Flash MX...", <FlashBall />],
  ];
  return (
    <footer className="flex h-[30px] shrink-0 items-stretch bg-linear-to-b from-[#3c82f0] via-[#245edb] via-20% to-[#1c4cc0] text-white">
      <button className="flex w-[95px] items-center gap-1 rounded-r-xl bg-linear-to-b from-[#60b860] via-[#389438] via-30% to-[#2c7c2c] pl-2.5 shadow-[inset_-2px_-2px_4px_#1c5c1c]">
        <Ic w={20} h={20}>
          <path d="M3 4c2-2 4-2 6-1L7.500 9c-2-1-4-1-6 0z" fill="#f0532c" /><path d="M10 3.500c2 1 4 1 6.500 0L15 9.500c-2 1-4 1-6.500 0z" fill="#84c83c" />
          <path d="M1 10c2-1 4-1 6 0L5.500 16c-2-1-4-1-5.500 0z" fill="#48a0f0" /><path d="M8 10.500c2 1 4 1 6.500 0L13 16.500c-2 1-4 1-6.500 0z" fill="#fcc820" />
        </Ic>
        <span className="text-[16px] font-bold italic [text-shadow:1px_1px_1px_#1c4c1c]">пуск</span>
      </button>
      <div className="flex w-[104px] shrink-0 items-center gap-[7px] pl-3">
        <button aria-label="Internet Explorer"><Ic><circle cx="8" cy="8" r="6.500" fill="#d0ecfc" stroke="#2c84cc" /><path d="M4.500 8.500h7C11.500 3.500 4.500 3.500 4.500 8.500c0 4 5 4 6.500 2" stroke="#1c6cc8" strokeWidth="2" /><path d="M1 12C3 6 9 2 15 2" stroke="#f4f8ff" /></Ic></button>
        <button aria-label="Word"><WordI /></button>
        <button aria-label="Media Player"><Ic><circle cx="8" cy="8" r="7" fill="#e87818" /><path d="M8 1a7 7 0 0 1 7 7H8z" fill="#58b040" /><path d="M1 8a7 7 0 0 0 7 7V8z" fill="#2868d0" /><circle cx="8" cy="8" r="4.500" fill="#fff" /><path d="M6.500 5v6l4-3z" fill="#124" /></Ic></button>
        <button className="mb-2 ml-1.5 text-[14px] leading-3">»</button>
      </div>
      <div className="flex min-w-0 flex-1 items-center gap-0.5">
        {tasks.map(([t, ic], i) => (
          <button key={t} className={`flex h-[24px] w-[158px] items-center gap-1 rounded-[3px] pl-2 text-[11px] whitespace-nowrap ${i === 2 ? "bg-[#1c4cb0] shadow-[inset_1px_1px_2px_#0c2c78]" : "bg-linear-to-b from-[#64a0fc] via-[#3c80f0] via-20% to-[#3878e8]"}`}>{ic}{t}</button>
        ))}
      </div>
      <span className="mr-4 self-center text-[11px]">RL</span>
      <div className="flex w-[108px] items-center gap-0.5 border-l border-[#0c50a8] bg-linear-to-b from-[#18b8f4] via-[#1290e8] via-20% to-[#0f84dc] pl-[7px] text-[11px]">
        <Ic><path d="M0 0h16v16H0z" fill="#000080" /><path d="M2 2h11v12H2z" fill="#fff" /><path d="M10 3c2 5-1 9-6 8" stroke="#000080" strokeWidth="2.500" /></Ic>
        <Ic><path d="M2 6l7-4v11L2 9z" fill="#888" stroke="#333" /><circle cx="6" cy="7" r="4.500" fill="#999" stroke="#444" /><circle cx="6" cy="7" r="1.800" fill="#333" /><path d="M12 9c1 2 0 4-1 5" stroke="#cde" /></Ic>
        <Ic><path d="M0 0h16v16H0z" fill="#000060" /><circle cx="8" cy="8" r="1.800" fill="#ffe840" /><path d="M5 4.500c-2 2-2 5 0 7M11 4.500c2 2 2 5 0 7M3 3C0 6 0 10 3 13M13 3c3 3 3 7 0 10" stroke="#ffe840" /></Ic>
        <time className="ml-1">21:29</time>
      </div>
    </footer>
  );
}

export default function App() {
  return (
    <div className="flex min-h-screen flex-col bg-[#ece9d8] font-['Liberation_Sans',Arial,sans-serif] leading-none">
      <TitleBar />
      <MenuBar />
      <div className="flex min-h-0 flex-1 border-b border-[#aca899]">
        <Toolbox />
        <main className="flex min-w-0 flex-1 flex-col">
          <Toolbars />
          <PanelHead title="Монтажный стол" open />
          <Timeline />
          <SceneBar />
          <Stage />
          <PanelHead title="Действия - Кадр" />
          <PanelHead title="Параметры" open menu />
          <Properties />
        </main>
        <div className="w-[5px] shrink-0 border-r border-white" />
        <Dock />
      </div>
      <div className="flex h-[17px] shrink-0 items-center justify-end border-t border-[#d0cdbc] bg-linear-to-b from-[#e4e1d0] via-[#f4f2e8] to-[#ece9d8] pr-1 text-[11px] text-black">
        <span className="border-l border-[#aca899] pl-1">NUM</span>
      </div>
      <TaskBar />
    </div>
  );
}
